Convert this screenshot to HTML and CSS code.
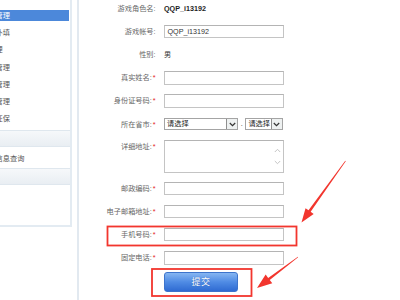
FILE: index.html
```html
<!DOCTYPE html>
<html lang="zh-CN">
<head>
    <meta charset="UTF-8">
    <meta name="viewport" content="width=device-width, initial-scale=1.0">
    <title>帐号资料补填</title>
    <link rel="stylesheet" href="styles.css">
</head>
<body>
<div class="page">

    <aside class="sidebar">
        <ul class="menu">
            <li class="menu-item active">帐号管理</li>
            <li class="menu-item">资料补填</li>
            <li class="menu-item">总代理</li>
            <li class="menu-item">游戏管理</li>
            <li class="menu-item">密码管理</li>
            <li class="menu-item">安全管理</li>
            <li class="menu-item">身份证保</li>
        </ul>
        <div class="menu-head"></div>
        <ul class="menu menu-sub">
            <li class="menu-item">帐号信息查询</li>
        </ul>
        <div class="menu-head"></div>
    </aside>

    <main class="content">
        <form class="reg-form" onsubmit="return false">
            <div class="row">
                <span class="label">游戏角色名:</span>
                <span class="field value strong">QQP_i13192</span>
            </div>
            <div class="row">
                <span class="label">游戏帐号:</span>
                <span class="field"><span class="input">QQP_i13192</span></span>
            </div>
            <div class="row">
                <span class="label">性别:</span>
                <span class="field value">男</span>
            </div>
            <div class="row">
                <span class="label">真实姓名:<i>*</i></span>
                <span class="field"><span class="input"></span></span>
            </div>
            <div class="row">
                <span class="label">身份证号码:<i>*</i></span>
                <span class="field"><span class="input"></span></span>
            </div>
            <div class="row">
                <span class="label">所在省市:<i>*</i></span>
                <span class="field selects">
                    <span class="select select-wide">
                        <span class="select-text">请选择</span>
                        <span class="select-arrow"><svg width="7" height="5" viewBox="0 0 7 5"><path d="M0.8 1l2.7 2.7L6.2 1" fill="none" stroke="#333" stroke-width="1.2"/></svg></span>
                    </span>
                    <span class="dot">.</span>
                    <span class="select select-small">
                        <span class="select-text">请选择</span>
                        <span class="select-arrow"><svg width="7" height="5" viewBox="0 0 7 5"><path d="M0.8 1l2.7 2.7L6.2 1" fill="none" stroke="#333" stroke-width="1.2"/></svg></span>
                    </span>
                </span>
            </div>
            <div class="row row-tall">
                <span class="label">详细地址:<i>*</i></span>
                <span class="field">
                    <span class="textarea">
                        <span class="scroll">
                            <svg width="7" height="5" viewBox="0 0 7 5"><path d="M0.8 4L3.5 1.3 6.2 4" fill="none" stroke="#c4c4c4" stroke-width="1"/></svg>
                            <svg width="7" height="5" viewBox="0 0 7 5"><path d="M0.8 1l2.7 2.7L6.2 1" fill="none" stroke="#c4c4c4" stroke-width="1"/></svg>
                        </span>
                    </span>
                </span>
            </div>
            <div class="row">
                <span class="label">邮政编码:<i>*</i></span>
                <span class="field"><span class="input"></span></span>
            </div>
            <div class="row">
                <span class="label">电子邮箱地址:<i>*</i></span>
                <span class="field"><span class="input"></span></span>
            </div>
            <div class="row">
                <span class="label">手机号码:<i>*</i></span>
                <span class="field"><span class="input"></span></span>
            </div>
            <div class="row">
                <span class="label">固定电话:<i>*</i></span>
                <span class="field"><span class="input"></span></span>
            </div>
            <div class="row row-btn">
                <span class="label"></span>
                <span class="field"><button class="submit" type="submit">提交</button></span>
            </div>
        </form>
    </main>

    <!-- annotation marks drawn over the screenshot -->
    <svg class="marks" width="400" height="300" viewBox="0 0 400 300">
        <rect x="107.5" y="226.5" width="189" height="19" fill="none" stroke="#f2362e" stroke-width="1.8"/>
        <rect x="152" y="269" width="99.5" height="27" fill="none" stroke="#f2362e" stroke-width="1.8"/>
        <polygon fill="#f2362e" points="345.25,160.83 308.54,210.33 305.52,208.18 301.5,222.5 313.68,213.98 310.66,211.83 345.75,161.17"/>
        <polygon fill="#f2362e" points="297.85,256.8 268.19,277.91 265.65,274.56 257,288 272.29,283.34 269.75,279.99 298.15,257.2"/>
    </svg>

</div>
</body>
</html>
```

FILE: styles.css
```css
body {
    margin: 0;
    background-color: #ffffff;
    font-family: "Liberation Sans", "Noto Sans CJK SC", sans-serif;
    font-size: 7.2px;
    color: #333333;
}
.page {
    position: relative;
    display: flex;
    align-items: flex-start;
    width: 400px;
    height: 300px;
    overflow: hidden;
}

/* left menu */
.sidebar {
    width: 72px;
    height: 227px;
    margin-right: 5px;
    padding-top: 10px;
    box-sizing: border-box;
    border-right: 2px solid #e3ebf2;
    border-bottom: 2px solid #e3ebf2;
    flex-shrink: 0;
}
.menu {
    list-style: none;
    margin: 0;
    padding: 0;
    display: flex;
    flex-direction: column;
    gap: 6.2px;
}
.menu-item {
    height: 11px;
    line-height: 11px;
    margin-right: 1px;
    color: #555555;
    white-space: nowrap;
    overflow: hidden;
    text-indent: -18.8px;
}
.menu-item.active {
    background-color: #4c88da;
    color: #ffffff;
}
.menu-head {
    height: 15px;
    margin-top: 6px;
    border-top: 1px solid #dfe7ee;
    border-bottom: 1px solid #dfe7ee;
    background: linear-gradient(#f6f8fa, #e9eef3);
}
.menu-sub {
    height: 21px;
    justify-content: center;
}
.menu-sub + .menu-head {
    margin-top: 0;
}
.menu-sub .menu-item {
    line-height: 14px;
    height: 14px;
    margin-top: 2px;
}

/* form area */
.content {
    flex: 1;
    height: 300px;
    border-left: 2px solid #e2e9f0;
}
.reg-form {
    margin-top: -3px;
}
.row {
    display: flex;
    align-items: center;
    height: 23.1px;
}
.label {
    width: 76.5px;
    text-align: right;
    line-height: 13px;
    color: #666666;
    white-space: nowrap;
}
.label i {
    font-style: normal;
    color: #e41c1c;
    margin-left: 1px;
}
.field {
    margin-left: 8.5px;
    display: flex;
    align-items: center;
}
.value {
    color: #333333;
    line-height: 13px;
}
.value.strong {
    color: #1e1e1e;
    font-weight: bold;
}
.input {
    display: block;
    width: 120px;
    height: 13.4px;
    box-sizing: border-box;
    padding-left: 2.5px;
    border: 1px solid #c4c4c4;
    border-top-color: #b4b4b4;
    line-height: 11.4px;
    color: #333333;
    font-size: 7.2px;
}

.selects {
    height: 12px;
}
.select {
    display: flex;
    height: 12px;
    box-sizing: border-box;
    border: 1px solid #a4a4a4;
    background-color: #ffffff;
}
.select-wide {
    width: 74px;
}
.select-small {
    width: 37.6px;
}
.select-text {
    flex: 1;
    overflow: hidden;
    white-space: nowrap;
    padding-left: 2px;
    line-height: 10px;
    color: #222222;
}
.select-arrow {
    width: 10px;
    display: flex;
    align-items: center;
    justify-content: center;
    border-left: 1px solid #8f8f8f;
    background-color: #eef1f1;
    flex-shrink: 0;
}
.dot {
    width: 7.4px;
    text-align: center;
    line-height: 12px;
    color: #333333;
}

.row-tall {
    height: 41.5px;
    align-items: flex-start;
    padding-top: 4.45px;
    box-sizing: border-box;
}
.textarea {
    display: flex;
    justify-content: flex-end;
    width: 120px;
    height: 33.3px;
    box-sizing: border-box;
    border: 1px solid #c4c4c4;
    border-top-color: #b4b4b4;
}
.scroll {
    width: 11px;
    display: flex;
    flex-direction: column;
    align-items: center;
    gap: 6.5px;
    padding-top: 7px;
}

.row-btn {
    margin-top: 0.6px;
}
.submit {
    width: 74px;
    height: 20px;
    padding: 0;
    border: 1px solid #3d74cc;
    border-radius: 3px;
    background: linear-gradient(#86b6f2, #4f8be4 50%, #2f6bd2);
    color: #ffffff;
    font-family: "Liberation Sans", "Noto Sans CJK SC", sans-serif;
    font-size: 9px;
    letter-spacing: 0.5px;
    text-shadow: 0 0 1px rgba(20, 60, 140, 0.6);
    cursor: pointer;
}

.marks {
    position: absolute;
    top: 0;
    left: 0;
    pointer-events: none;
}
```
